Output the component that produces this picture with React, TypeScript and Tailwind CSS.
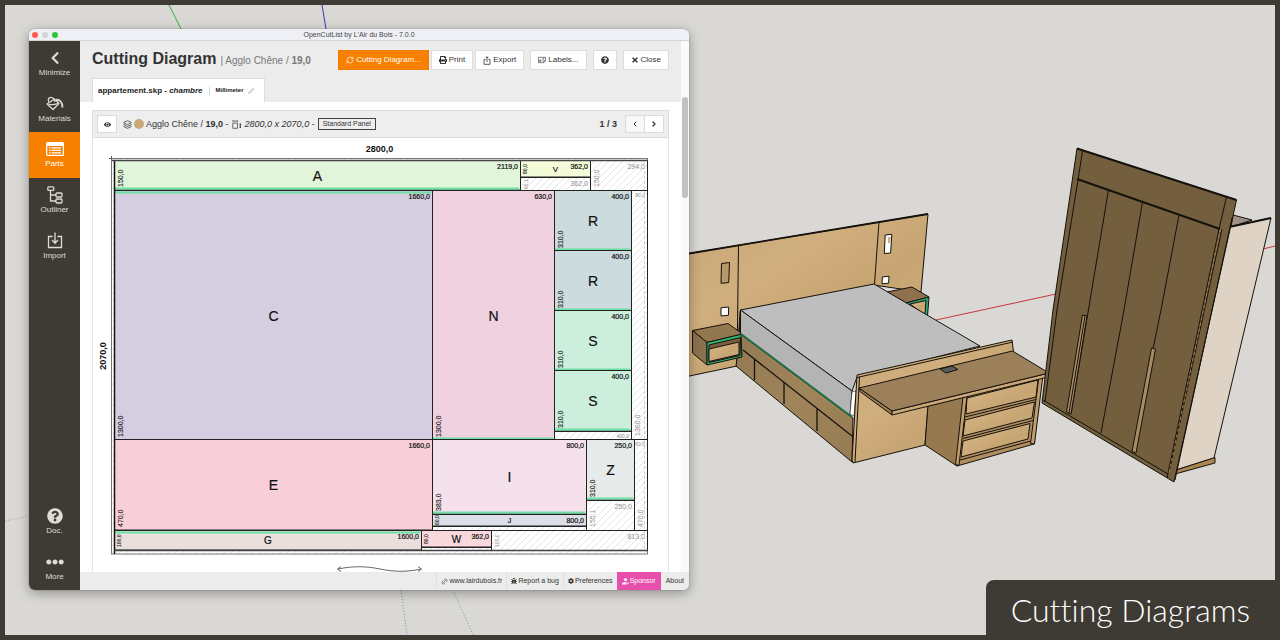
import React from 'react';
import {
  FaBug,
  FaChevronLeft,
  FaCog,
  FaEllipsisH,
  FaEye,
  FaHandHoldingHeart,
  FaPencilAlt,
  FaPrint,
  FaQuestionCircle,
  FaTimes,
} from 'react-icons/fa';
import { ChevronLeft, ChevronRight, Layers, Link2, RefreshCw } from 'lucide-react';

/* ---------- icons ---------- */

type IconProps = { className?: string };

const BucketIcon: React.FC<IconProps> = ({ className }) => (
  <svg viewBox="0 0 18 16" className={className} fill="none" stroke="currentColor" strokeWidth="1.2" strokeLinejoin="round">
    <path d="M1 8 L8.500 3 L13 7.500 L7 13.500 Z" />
    <path d="M2.500 8.200 C5 9 9 8.500 12 7.500 M3 6 C0.500 2 5 0 8 3 L9 6" />
    <path d="M10 3.800 C14 3.500 16.500 6 16.500 11.500" strokeWidth="1.800" />
  </svg>
);

const PartsIcon: React.FC<IconProps> = ({ className }) => (
  <svg viewBox="0 0 18 14" className={className} fill="currentColor">
    <path fillRule="evenodd" d="M1.500 0 H16.500 A1.500 1.500 0 0 1 18 1.500 V12.500 A1.500 1.500 0 0 1 16.500 14 H1.500 A1.500 1.500 0 0 1 0 12.500 V1.500 A1.500 1.500 0 0 1 1.500 0 Z M1.300 4 V12.700 H16.700 V4 Z" />
    <path d="M3 5.300h1.500v1.300H3z M5.500 5.300h9.500v1.300H5.500z M3 7.800h1.500v1.300H3z M5.500 7.800h9.500v1.300H5.500z M3 10.300h1.500v1.300H3z M5.500 10.300h9.500v1.300H5.500z" />
  </svg>
);

const OutlinerIcon: React.FC<IconProps> = ({ className }) => (
  <svg viewBox="0 0 16 18" className={className} fill="none" stroke="currentColor" strokeWidth="1.300">
    <rect x="0.800" y="0.800" width="6" height="3.600" rx="1" />
    <rect x="9" y="7" width="6" height="4" rx="1" />
    <rect x="9" y="13" width="6" height="4" rx="1" />
    <path d="M3.500 4.500 V15 H9 M3.500 9 H9" />
  </svg>
);

const ImportIcon: React.FC<IconProps> = ({ className }) => (
  <svg viewBox="0 0 16 17" className={className} fill="none" stroke="currentColor" strokeWidth="1.300">
    <path d="M5.500 4.500 H1.500 V15.500 H14.500 V4.500 H10.500 M8 0.500 V11 M5 8 L8 11.200 L11 8" />
  </svg>
);

const ExportIcon: React.FC<IconProps> = ({ className }) => (
  <svg viewBox="0 0 8 9" className={className} fill="none" stroke="currentColor" strokeWidth="0.800">
    <path d="M2.500 3.500 H1 V8.300 H7 V3.500 H5.500 M4 6 V0.800 M2.500 2.200 L4 0.700 L5.500 2.200" />
  </svg>
);

const LabelIcon: React.FC<IconProps> = ({ className }) => (
  <svg viewBox="0 0 9 8" className={className} fill="none" stroke="currentColor" strokeWidth="0.700">
    <path d="M0.500 1 H8.500 V5 L6.500 7 H0.500 Z M8.500 5 H6.500 V7" />
    <path d="M1.500 5.500 L2.500 3.500 L3.500 5.500 Z M4.800 2.500 H7 M4.800 4 H6.500" />
  </svg>
);

const SizeIcon: React.FC<IconProps> = ({ className }) => (
  <svg viewBox="0 0 10 9" className={className} fill="none" stroke="currentColor" strokeWidth="0.700">
    <path d="M0.800 3 H5.500 V8.300 H0.800 Z M0.800 1 H5.500 M0.800 0.400 V1.800 M5.500 0.400 V1.800" />
    <path d="M8.300 3.500 V8" strokeWidth="0.900" />
    <path d="M7.200 4.800 L8.300 3.300 L9.400 4.800 Z M7.200 6.800 L8.300 8.300 L9.400 6.800 Z" fill="currentColor" stroke="none" />
  </svg>
);

/* ---------- 3D scene behind the window ---------- */

const Scene: React.FC = () => (
  <svg
    viewBox="5 5 1270 630"
    preserveAspectRatio="xMidYMid slice"
    className="absolute inset-0 h-full w-full"
    aria-hidden="true"
  >
    <defs>
      <linearGradient id="wood" x1="0" y1="0" x2="1" y2="1">
        <stop offset="0" stopColor="#c8a777" />
        <stop offset="0.350" stopColor="#d0ae7d" />
        <stop offset="0.600" stopColor="#c7a573" />
        <stop offset="1" stopColor="#d0af7f" />
      </linearGradient>
      <linearGradient id="woodDark" x1="0" y1="0" x2="1" y2="1">
        <stop offset="0" stopColor="#927952" />
        <stop offset="0.500" stopColor="#a0845a" />
        <stop offset="1" stopColor="#977b53" />
      </linearGradient>
    </defs>

    {/* axes */}
    <g fill="none" strokeWidth="1">
      <path d="M169 5 L181 29" stroke="#35b135" />
      <path d="M322 5 L326 29" stroke="#3a37b8" />
      <path d="M936 320 L1056 294 M1263 249 L1275 246" stroke="#c8373c" />
      <path d="M5 521 L29 516" stroke="#d08a8a" strokeDasharray="1 2" />
      <path d="M401 590 L407 635" stroke="#7d7bc4" strokeDasharray="1 2" />
      <path d="M453 590 L473 635" stroke="#5fb95f" strokeDasharray="1 2" />
    </g>

    <g stroke="#15120d" strokeWidth="1" strokeLinejoin="round">
      {/* headboard */}
      <path d="M680 255 L928 214 L921 292 L874 285 L740 311 L737 366 L680 378 Z" fill="url(#wood)" />
      <path d="M680 255 L928 214" strokeWidth="1.800" />
      <path d="M738.500 246 L737 366 M741 311 L739 335 M879 222 L874.500 284" fill="none" />
      <path d="M721.500 263.500 L729.500 262.500 L728.700 282.500 L721 283.300 Z" fill="#b8976a" />
      <path d="M721 307.800 L728.700 307 L728.400 315.300 L721 315.900 Z" fill="#fff" />
      <path d="M885.200 235 L891.800 234.300 L890.600 253 L884.300 253.500 Z" fill="#fff" />
      <path d="M888 237 L890.800 236.700 L890 243 L888 243 Z" fill="#d3b07e" stroke="none" />
      <path d="M882.400 277 L889 276.200 L888.600 283.200 L882 283.800 Z" fill="#fff" />

      {/* right nightstand */}
      <path d="M887 292 L912 287 L929 297 L906 303 Z" fill="#8d724d" />
      <path d="M906 303 L929 297 L927.500 316 L922 314 Z" fill="#2fa870" />
      <path d="M910 304 L926 300.500 L925 313.500 L922 313 Z" fill="url(#wood)" />

      {/* left nightstand */}
      <path d="M692.500 330.500 L728 323.500 L742.500 334 L707 342.500 Z" fill="#93774f" />
      <path d="M692.500 330.500 L707 342.500 L707 365 L692.500 353 Z" fill="#8a7150" />
      <path d="M707 342.500 L742.500 334 L742 357 L707 365 Z" fill="#2fb87a" />
      <path d="M709 345 L740.500 337.500 L740 355.500 L709 362.500 Z" fill="#7b5f3c" />
      <path d="M709 349 L739 342 L739 354.500 L709 361.500 Z" fill="url(#wood)" />

      {/* bed base */}
      <path d="M741 334 L853 418 L852 462 L736 366 L737 358 L742 357 Z" fill="url(#woodDark)" />
      <path d="M743 350 L852 436 M754.500 359 L754.500 380 M784 382 L784 404 M817 409 L817 431" fill="none" strokeWidth="1.300" />

      {/* mattress */}
      <path d="M740.500 310 L874 284 L980 346 L857 377 L852 391 Z" fill="#bebebe" />
      <path d="M740.500 310 L852 391 L850 416 L740.500 334 Z" fill="#b4b4b4" />
      <path d="M741 334 L852 417" stroke="#1d6e47" strokeWidth="1.800" />
      <path d="M852 392 L856 391 L854 416 L850 414 Z" fill="#fff" strokeWidth="0.500" />

      {/* foot panel */}
      <path d="M857 375 L1012 340 L1013.500 352 L928 406 L925 445 L853 463 L852 460 Z" fill="url(#wood)" />
      <path d="M857 377.500 L1013 342 M859.500 377 L855 462" fill="none" />

      {/* desk */}
      <path d="M928 406 L965 396 L957 466 L925 445 Z" fill="#97794f" />
      <path d="M965 396 L1042 376 L1034 444 L957 466 Z" fill="#b08e60" />
      <path d="M967 398 L1038 380 L1036 397 L966 414 Z" fill="url(#wood)" />
      <path d="M965 420 L1034.500 402 L1032 418 L963 436 Z" fill="url(#wood)" />
      <path d="M963 441 L1030 423.500 L1028 439 L961 457 Z" fill="url(#wood)" />
      <path d="M965 417 L1036 399.500 M963 438.500 L1033 420.500 M960 460 L1031 441" fill="none" />
      <path d="M963 397 L967 396 L959 465 L955.500 465 Z" fill="#c29f6e" />
      <path d="M1039 376 L1043 375 L1034.500 444 L1030.500 443.500 Z" fill="#c29f6e" />
      <path d="M859 388 L892 411 L892 415 L860 391.500 Z" fill="#9b7d53" />
      <path d="M892 411 L1049 373 L1048 377 L892 415 Z" fill="#cba878" />
      <path d="M859 388 L1012.500 351 L1049 373 L892 411 Z" fill="#9c8059" />
      <path d="M940 369 L952 366 L958 369.500 L946 373 Z" fill="#5c5c5a" />

      {/* wardrobe */}
      <path d="M1233 215 L1252 220 L1231 227 Z" fill="#9c9184" />
      <path d="M1229 227 L1271 218 L1214 458 L1176 470 Z" fill="#dfd3c5" />
      <path d="M1229 227 L1271 218" strokeWidth="1.800" />
      <path d="M1176 470 L1215 457.500 L1215 463 L1175 474 Z" fill="#a98650" />
      <path d="M1077 148.500 L1236.500 200 L1174 482 L1042 403 L1053 310 Z" fill="#735e3e" />
      <path d="M1077 148.500 L1236.500 200 M1077 179 L1220 229" strokeWidth="1.900" />
      <path d="M1082.500 151 L1078 180 L1057 310 L1045 402 M1043 400 L1168 474" fill="none" />
      <path d="M1108.500 190 L1071 414 M1142.500 202 L1124 310 L1101 433 M1179 215 L1161 310 L1153 349" fill="none" />
      <path d="M1226.500 197 L1219 229 L1167 478 M1222 229 L1170 468" fill="none" />
      <path d="M1232 218 L1175 480" />
      <path d="M1220.500 229 L1169 473" stroke="#a9844d" strokeDasharray="3 3" />
      <path d="M1082.500 315 L1087 316 L1071 414 L1066.500 412 Z" fill="#a98b63" />
      <path d="M1085 316 L1069 413" />
      <path d="M1151.500 348 L1155.500 349 L1136 453 L1132 451.500 Z" fill="#a98b63" />
    </g>
  </svg>
);

/* ---------- cutting diagram ---------- */

type Part = {
  name: string;
  x: number;
  y: number;
  w: number;
  h: number;
  fill: string;
  length: string;
  width: string;
  small?: boolean;
  edge?: 'top' | 'bottom';
};

const PARTS: Part[] = [
  { name: 'A', x: 115, y: 161, w: 405, h: 29, fill: '#e0f5da', length: '2119,0', width: '150,0', edge: 'bottom' },
  { name: 'V', x: 521, y: 161, w: 69, h: 16, fill: '#f3fbd8', length: '362,0', width: '80,0', small: true },
  { name: 'C', x: 115, y: 191, w: 317, h: 249, fill: '#d5cde0', length: '1660,0', width: '1300,0', edge: 'top' },
  { name: 'N', x: 433, y: 191, w: 121, h: 249, fill: '#efd1df', length: '630,0', width: '1300,0', edge: 'bottom' },
  { name: 'R', x: 555, y: 191, w: 76, h: 60, fill: '#cbdbde', length: '400,0', width: '310,0', edge: 'bottom' },
  { name: 'R', x: 555, y: 251, w: 76, h: 60, fill: '#cbdbde', length: '400,0', width: '310,0', edge: 'bottom' },
  { name: 'S', x: 555, y: 311, w: 76, h: 60, fill: '#cceedd', length: '400,0', width: '310,0', edge: 'bottom' },
  { name: 'S', x: 555, y: 371, w: 76, h: 60, fill: '#cceedd', length: '400,0', width: '310,0', edge: 'bottom' },
  { name: 'E', x: 115, y: 440, w: 317, h: 90, fill: '#f8cfd8', length: '1660,0', width: '470,0' },
  { name: 'I', x: 433, y: 440, w: 153, h: 74, fill: '#f4e1ec', length: '800,0', width: '383,0', edge: 'bottom' },
  { name: 'J', x: 433, y: 515, w: 153, h: 11, fill: '#dcdfe7', length: '800,0', width: '60,0', small: true },
  { name: 'Z', x: 587, y: 440, w: 47, h: 60, fill: '#e6eae9', length: '250,0', width: '310,0', edge: 'bottom' },
  { name: 'G', x: 115, y: 531, w: 306, h: 19, fill: '#eadfdc', length: '1600,0', width: '100,0', small: true, edge: 'top' },
  { name: 'W', x: 422, y: 531, w: 69, h: 16, fill: '#f8d8dd', length: '362,0', width: '80,0', small: true },
];

type Leftover = { x: number; y: number; w: number; h: number; length?: string; width?: string; tiny?: boolean; tinyWidth?: boolean };

const LEFTOVERS: Leftover[] = [
  { x: 521, y: 178, w: 69, h: 12, length: '362,0', width: '65,1', tinyWidth: true },
  { x: 591, y: 161, w: 56, h: 29, length: '294,0', width: '150,0' },
  { x: 555, y: 432, w: 76, h: 7, length: '400,0', tiny: true },
  { x: 632, y: 191, w: 15, h: 248, length: '80,0', width: '1300,0', tiny: true },
  { x: 433, y: 527, w: 153, h: 3 },
  { x: 587, y: 501, w: 47, h: 29, length: '250,0', width: '155,1' },
  { x: 635, y: 440, w: 12, h: 90, length: '60,0', width: '470,0', tiny: true },
  { x: 422, y: 548, w: 69, h: 2 },
  { x: 492, y: 531, w: 155, h: 19, length: '813,0', width: '100,0', tinyWidth: true },
];

const letterSize = (p: Part) => {
  if (p.name === 'J') return 7;
  if (p.name === 'V') return 8;
  return p.small ? 10 : 14;
};

const Diagram: React.FC = () => (
  <svg viewBox="93 138 575 435" className="block w-full font-['Liberation_Sans',Arial,sans-serif]" role="img" aria-label="Cutting diagram 1 / 3">
    <defs>
      <pattern id="hatch" width="7" height="7" patternUnits="userSpaceOnUse">
        <path d="M-1 8 L8 -1 M-1 1 L1 -1 M6 8 L8 6" stroke="#dedede" strokeWidth="0.800" />
      </pattern>
    </defs>

    <text x="379.500" y="152" textAnchor="middle" fontSize="9" fontWeight="700" fill="#111">2800,0</text>
    <text transform="translate(106 356) rotate(-90)" textAnchor="middle" fontSize="9" fontWeight="700" fill="#111">2070,0</text>

    {/* raw panel with its trimming margin */}
    <rect x="111.500" y="158.500" width="536" height="395.500" fill="#fff" />
    <rect x="111.500" y="158.500" width="536" height="395.500" fill="url(#hatch)" stroke="#777" />
    <path d="M109 158.500 H112 M111.500 156 V159" stroke="#555" />

    {LEFTOVERS.map((r, i) => (
      <g key={i} fill="#909090">
        <rect x={r.x - 0.5} y={r.y - 0.5} width={r.w + 1} height={r.h + 1} fill="none" stroke="#222" />
        {r.length && (
          <text x={r.x + r.w - 2} y={r.y + (r.tiny ? 6 : 8)} textAnchor="end" fontSize={r.tiny ? 5 : 7}>{r.length}</text>
        )}
        {r.width && (
          <text transform={`translate(${r.x + (r.tinyWidth ? 7 : 8)} ${r.y + r.h - (r.h < 15 ? 1 : 3)}) rotate(-90)`} fontSize={r.tinyWidth ? 5 : 7}>
            {r.width}
          </text>
        )}
      </g>
    ))}

    {PARTS.map((p, i) => (
      <g key={i} fill="#111">
        <rect x={p.x - 0.5} y={p.y - 0.5} width={p.w + 1} height={p.h + 0.5} fill={p.fill} stroke="#222" />
        {p.edge && (
          <rect x={p.x} y={p.edge === 'top' ? p.y + 0.5 : p.y + p.h - 2.5} width={p.w - 1} height="2" fill="#6ce0a4" />
        )}
        <text
          x={p.x + p.w / 2}
          y={p.y + p.h / 2 + letterSize(p) * 0.36}
          textAnchor="middle"
          fontSize={letterSize(p)}
          stroke="#111"
          strokeWidth="0.200"
        >
          {p.name}
        </text>
        <text x={p.x + p.w - 2} y={p.y + 8} textAnchor="end" fontSize="7" stroke="#111" strokeWidth="0.200">{p.length}</text>
        <text
          transform={`translate(${p.x + (p.small ? 6 : 8)} ${p.y + p.h - (p.h < 15 ? 1 : 3)}) rotate(-90)`}
          fontSize={p.small ? 5 : 7}
          stroke="#111"
          strokeWidth="0.100"
        >
          {p.width}
        </text>
      </g>
    ))}

    <path d="M114.500 161 V554" stroke="#111" strokeWidth="1.500" />
    <path d="M112 160.500 H648 M114 550.500 H648" stroke="#444" strokeWidth="1.300" />
    <path d="M644.500 161 V550" stroke="#d0d0d0" strokeDasharray="3 2" />

    {/* grain direction */}
    <path d="M338 569 C352 566 366 566 380 569 S408 572 421 569 M341 566.500 L337.500 569 L341 571.500 M418 566.500 L421.500 569 L418 571.500" fill="none" stroke="#555" strokeWidth="0.900" />
  </svg>
);

/* ---------- window ---------- */

const NAV = [
  { label: 'Minimize', icon: <FaChevronLeft size={14} /> },
  { label: 'Materials', icon: <BucketIcon className="h-4 w-[18px]" /> },
  { label: 'Parts', icon: <PartsIcon className="h-[14px] w-[18px]" />, active: true },
  { label: 'Outliner', icon: <OutlinerIcon className="h-[18px] w-4" /> },
  { label: 'Import', icon: <ImportIcon className="h-[17px] w-4" /> },
];

const NAV_BOTTOM = [
  { label: 'Doc.', icon: <FaQuestionCircle size={16} /> },
  { label: 'More', icon: <FaEllipsisH size={18} /> },
];

type NavButtonProps = { label: string; icon: React.ReactNode; active?: boolean };

const NavButton: React.FC<NavButtonProps> = ({ label, icon, active }) => (
  <button
    type="button"
    className={`flex flex-1 flex-col items-center justify-center gap-px text-[8px] leading-[10px] ${active ? 'bg-[#f88000] text-white' : 'text-[#dddcd6]'}`}
  >
    <span className="flex h-[18px] items-center">{icon}</span>
    {label}
  </button>
);

type ButtonProps = { className?: string; label?: string; primary?: boolean; children: React.ReactNode };

const Button: React.FC<ButtonProps> = ({ className = '', label, primary, children }) => (
  <button
    type="button"
    aria-label={label}
    className={`flex h-5 items-center gap-[2px] border px-[7px] text-[8px] leading-[10px] ${primary ? 'border-[#f07c00] bg-[#f88000] text-white' : 'border-[#dcdcdc] bg-white text-[#333]'} ${className}`}
  >
    {children}
  </button>
);

const Sidebar: React.FC = () => (
  <nav className="flex w-[51px] shrink-0 flex-col justify-between bg-[#3e3b34]">
    <div className="flex h-[228px] flex-col">
      {NAV.map((item) => <NavButton key={item.label} {...item} />)}
    </div>
    <div className="flex h-[91px] flex-col">
      {NAV_BOTTOM.map((item) => <NavButton key={item.label} {...item} />)}
    </div>
  </nav>
);

const Header: React.FC = () => (
  <header className="flex h-[61px] shrink-0 flex-col justify-between bg-[#ececec] px-3 pt-2">
    <div className="flex items-center justify-between">
      <h1 className="flex items-baseline gap-1 text-base leading-5 font-bold text-[#333]">
        Cutting Diagram
        <small className="text-[10px] font-normal text-[#777]">| Agglo Chêne / <b>19,0</b></small>
      </h1>
      <div className="flex items-center">
        <Button primary><RefreshCw size={8} /> Cutting Diagram...</Button>
        <Button className="ml-[2px]"><FaPrint size={8} /> Print</Button>
        <Button className="ml-[2px]"><ExportIcon className="h-[9px] w-2" /> Export</Button>
        <Button className="ml-[6px]"><LabelIcon className="h-2 w-2" /> Labels...</Button>
        <Button className="ml-[6px]" label="Help"><FaQuestionCircle size={8} /></Button>
        <Button className="ml-[6px]"><FaTimes size={8} /> Close</Button>
      </div>
    </div>
    <div className="flex h-6 w-[173px] items-center border border-b-0 border-[#ddd] bg-white px-[5px] text-[8px] font-bold text-[#222]">
      <span>appartement.skp - <i>chambre</i></span>
      <span className="ml-[6px] h-2 w-px bg-[#ddd]" />
      <span className="ml-[6px] text-[6px]">Millimeter</span>
      <FaPencilAlt size={6} className="ml-1 text-[#ccc]" />
    </div>
  </header>
);

const PanelHeader: React.FC = () => (
  <div className="flex h-7 items-center justify-between border border-[#ddd] bg-[#eee] px-1 text-[9px] leading-3 text-[#333]">
    <div className="flex items-center">
      <button type="button" aria-label="Toggle visibility" className="flex h-[18px] w-5 items-center justify-center border border-[#dcdcdc] bg-white">
        <FaEye size={7} />
      </button>
      <Layers size={9} className="ml-[6px]" />
      <span className="mx-[2px] h-[10px] w-[10px] rounded-full bg-[#c9a87c]" />
      <span>Agglo Chêne / <b>19,0</b> -</span>
      <SizeIcon className="mx-[3px] h-[9px] w-[10px]" />
      <span><i>2800,0 x 2070,0</i> -</span>
      <span className="ml-[3px] border border-[#444] px-1 text-[7px] leading-[10px]">Standard Panel</span>
    </div>
    <div className="flex items-center">
      <b className="mr-2">1 / 3</b>
      <button type="button" aria-label="Previous" className="flex h-[18px] w-5 items-center justify-center border border-[#dcdcdc] bg-[#f8f8f8]">
        <ChevronLeft size={8} strokeWidth={3} />
      </button>
      <button type="button" aria-label="Next" className="-ml-px flex h-[18px] w-5 items-center justify-center border border-[#dcdcdc] bg-white">
        <ChevronRight size={8} strokeWidth={4} />
      </button>
    </div>
  </div>
);

const Footer: React.FC = () => (
  <footer className="flex h-[18px] shrink-0 justify-end bg-[#ececec] text-[7px] leading-[10px] text-[#333]">
    <a href="#site" className="flex items-center gap-px border-l border-[#e0e0e0] px-1"><Link2 size={7} className="-rotate-45" /> www.lairdubois.fr</a>
    <a href="#bug" className="flex items-center gap-px border-l border-[#e0e0e0] px-1"><FaBug size={6} /> Report a bug</a>
    <button type="button" className="flex items-center gap-px border-l border-[#e0e0e0] px-1"><FaCog size={6} /> Preferences</button>
    <button type="button" className="flex items-center gap-px bg-[#e84fac] px-[5px] text-white"><FaHandHoldingHeart size={7} /> Sponsor</button>
    <button type="button" className="px-[5px]">About</button>
  </footer>
);

export default function App() {
  return (
    <div className="relative h-screen min-h-[640px] overflow-hidden border-[5px] border-[#3e3b34] bg-[#d9d8d4] p-6 pb-[45px] font-['Liberation_Sans',Arial,sans-serif]">
      <Scene />

      <main className="relative flex h-full w-[54%] min-w-[660px] flex-col overflow-hidden rounded-md bg-white shadow-[0_3px_12px_rgba(0,0,0,0.35),0_0_1px_rgba(0,0,0,0.6)]">
        <div className="grid h-3 shrink-0 grid-cols-[1fr_auto_1fr] items-center border-b border-[#d3d4d8] bg-[#eef0f5] px-[3px]">
          <div className="flex gap-1">
            <span className="h-[6px] w-[6px] rounded-full bg-[#fe5b52]" />
            <span className="h-[6px] w-[6px] rounded-full bg-[#d2d3d7]" />
            <span className="h-[6px] w-[6px] rounded-full bg-[#2ac840]" />
          </div>
          <span className="text-[7px] leading-[10px] text-[#444]">OpenCutList by L'Air du Bois - 7.0.0</span>
        </div>

        <div className="flex min-h-0 flex-1">
          <Sidebar />
          <div className="flex min-w-0 flex-1 flex-col">
            <div className="flex min-h-0 flex-1">
              <div className="flex min-w-0 flex-1 flex-col">
                <Header />
                <div className="min-h-0 flex-1 overflow-hidden px-3 pt-2">
                  <PanelHeader />
                  <div className="border-x border-[#e4e4e4]"><Diagram /></div>
                </div>
              </div>
              {/* scrollbar gutter */}
              <div className="w-2 shrink-0 bg-[#fafafa] px-px pt-14">
                <div className="h-[101px] rounded-full bg-[#c1c1c1]" />
              </div>
            </div>
            <Footer />
          </div>
        </div>
      </main>

      <div className="absolute -right-[5px] -bottom-[5px] flex h-[60px] items-center rounded-tl-lg bg-[#3e3b34] pr-[30px] pl-[25px] font-['Lato',sans-serif] text-[32px] leading-10 font-light text-white [font-variant-ligatures:none]">
        Cutting Diagrams
      </div>
    </div>
  );
}
